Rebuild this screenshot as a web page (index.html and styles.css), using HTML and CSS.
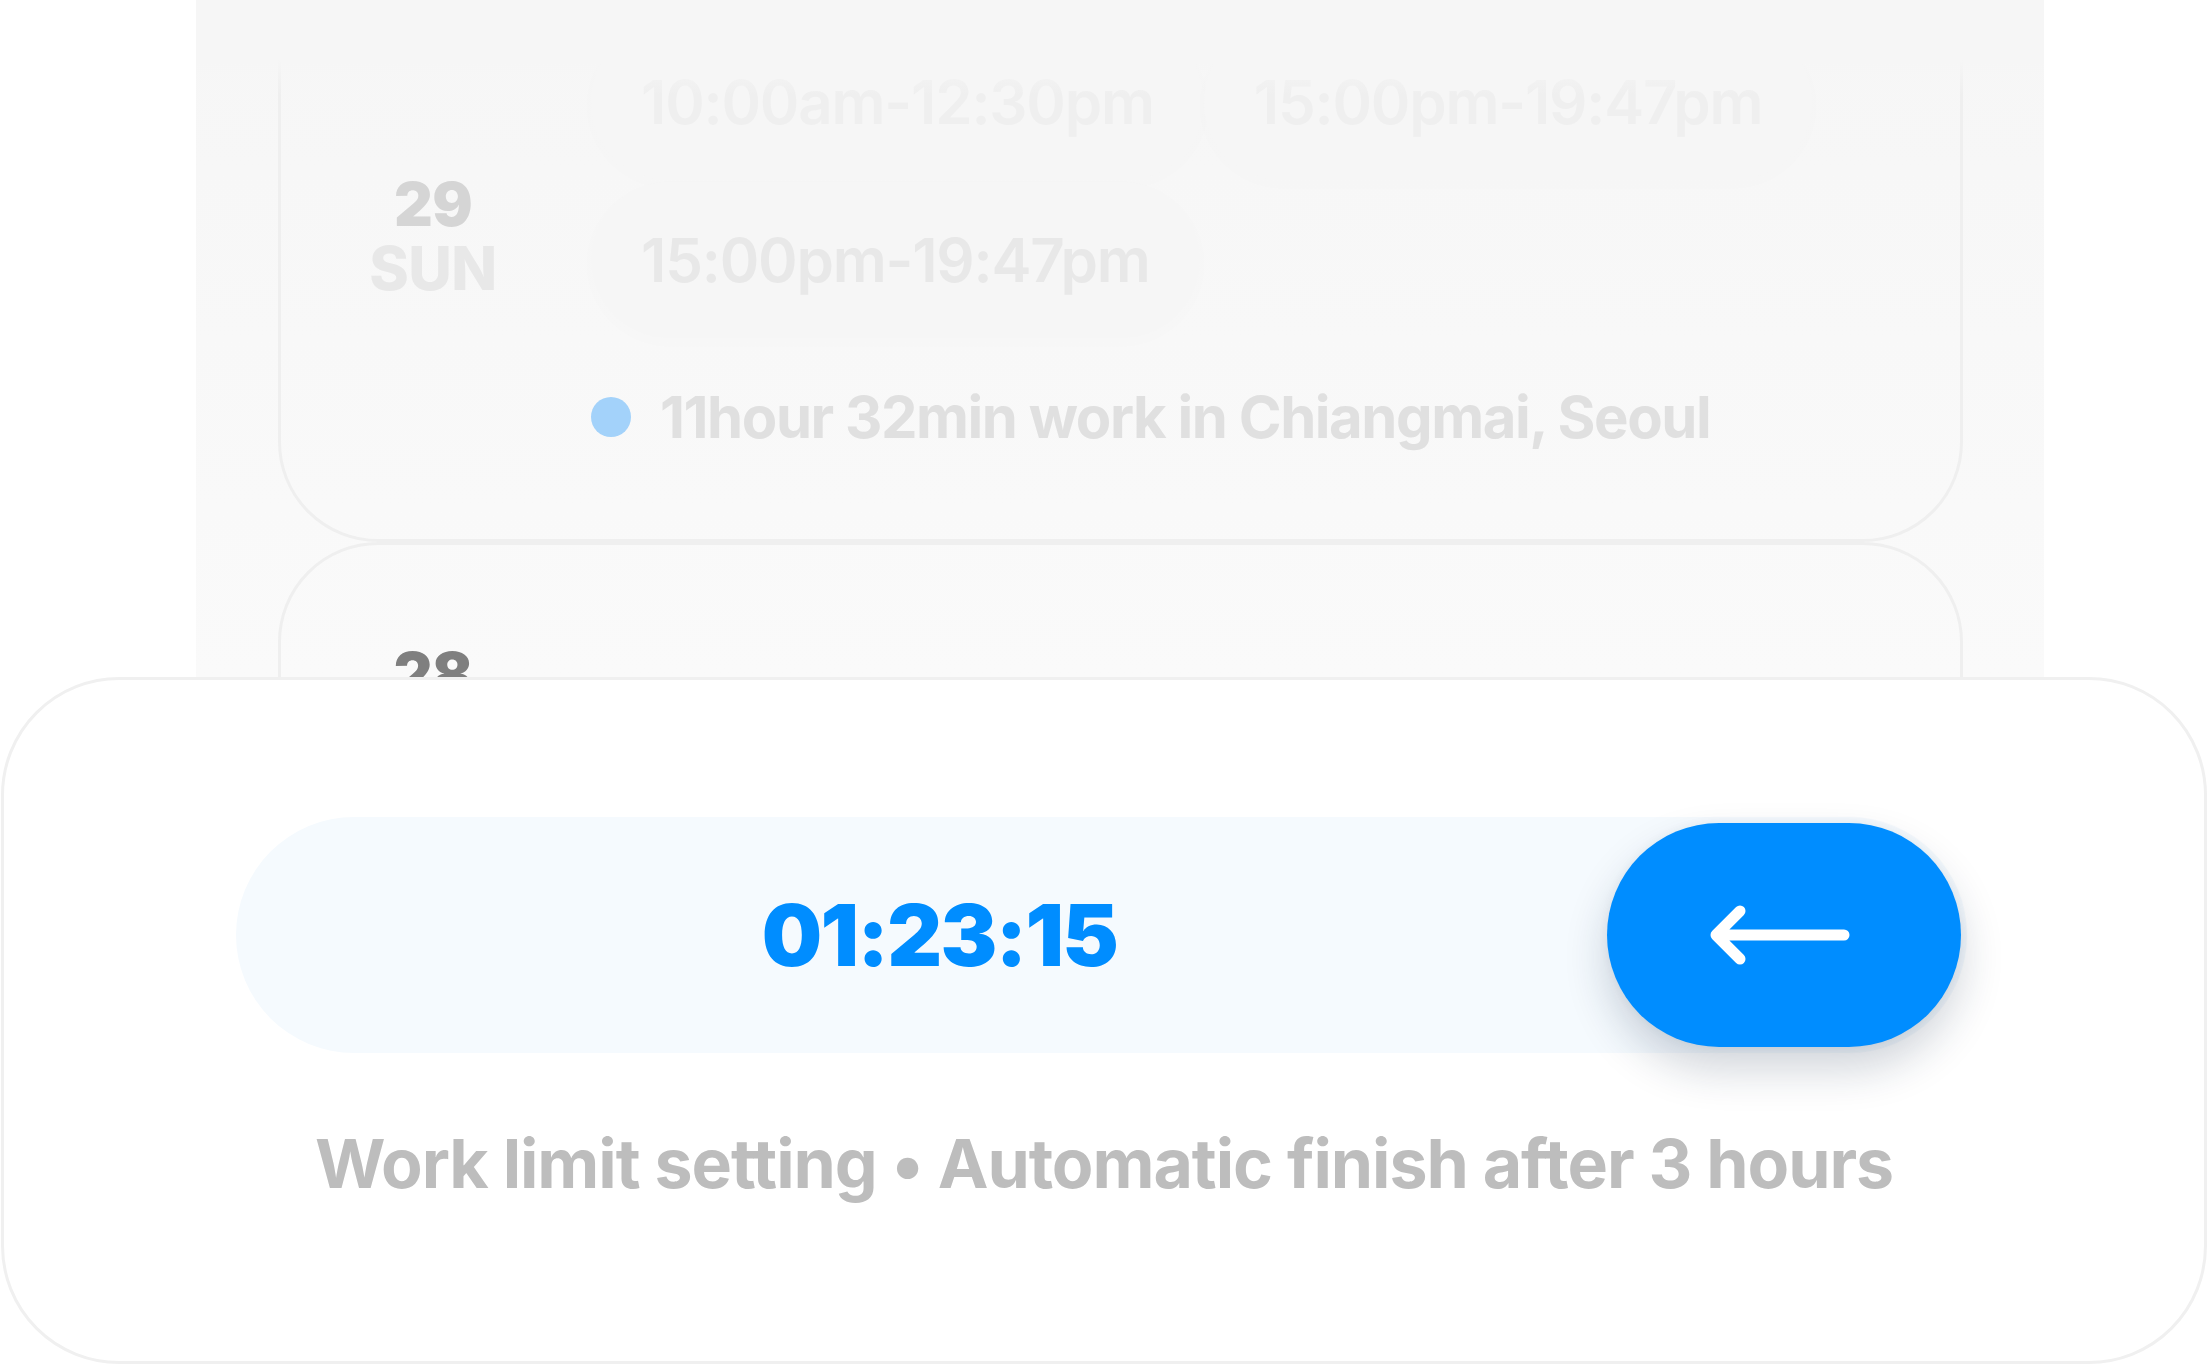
FILE: index.html
```html
<!DOCTYPE html>
<html lang="en">
<head>
<meta charset="utf-8">
<title>Work timer</title>
<link rel="stylesheet" href="styles.css">
</head>
<body>
<div class="screen">
  <section class="history">
    <div class="fade-top"></div>
    <article class="day-card day-card--first">
      <div class="date">
        <span class="date-num">29</span>
        <span class="date-day">SUN</span>
      </div>
      <div class="day-body">
        <div class="sessions">
          <span class="session session--far">10:00am-12:30pm</span>
          <span class="session session--far">15:00pm-19:47pm</span>
          <span class="session">15:00pm-19:47pm</span>
        </div>
        <div class="summary">
          <span class="dot"></span>
          <span class="summary-text">11hour 32min work in Chiangmai, Seoul</span>
        </div>
      </div>
    </article>
    <article class="day-card day-card--top">
      <div class="date">
        <span class="date-num date-num--dark">28</span>
      </div>
      <div class="day-body"></div>
    </article>
  </section>
  <section class="sheet">
    <div class="timer-bar">
      <div class="timer">01:23:15</div>
      <button class="back-btn" type="button" aria-label="Back">
        <svg class="arrow" width="150" height="70" viewBox="0 0 150 70" aria-hidden="true">
          <path d="M135 35 H7 M31 11 L7 35 L31 59" fill="none" stroke="#fff" stroke-width="11" stroke-linecap="round" stroke-linejoin="round"/>
        </svg>
      </button>
    </div>
    <p class="caption">Work limit setting • Automatic finish after 3 hours</p>
  </section>
</div>
</body>
</html>
```

FILE: styles.css
```css
html, body {
  margin: 0;
  padding: 0;
  background: #ffffff;
}

body {
  font-family: Inter, "Noto Sans", "Liberation Sans", sans-serif;
}

.screen {
  width: 2209px;
  height: 1372px;
  overflow: hidden;
}

/* ---------- history list ---------- */
.history {
  position: relative;
  box-sizing: border-box;
  width: 1848px;
  height: 677px;
  margin-left: 196px;
  padding: 0 81px 0 82px;
  overflow: hidden;
  background: linear-gradient(#f6f6f6, #fafafa);
}

.fade-top {
  position: absolute;
  top: 0;
  left: 0;
  right: 0;
  height: 95px;
  z-index: 2;
  background: linear-gradient(#f6f6f6 0, #f6f6f6 60px, rgba(246, 246, 246, 0) 95px);
}

.day-card {
  box-sizing: border-box;
  display: grid;
  grid-template-columns: 304px 1fr;
  column-gap: 6px;
  align-items: center;
  padding: 92px 0;
  border: 3px solid #efefef;
  border-radius: 100px;
}

.day-card--first {
  margin-top: -71px;
}

.day-card--top {
  align-items: start;
  padding-top: 97px;
}

.date {
  display: flex;
  flex-direction: column;
  align-items: center;
  font-size: 60px;
  font-weight: 800;
  line-height: 64px;
  letter-spacing: -0.01em;
}

.date-num {
  font-weight: 900;
  color: #d5d5d5;
}

.date-num--dark {
  color: #7f7f7f;
}

.date-day {
  color: #e8e8e8;
}

.sessions {
  display: flex;
  flex-wrap: wrap;
  gap: 2px 0;
}

.session {
  box-sizing: border-box;
  height: 156px;
  padding: 0 50px;
  border-radius: 78px;
  display: flex;
  align-items: center;
  font-size: 60px;
  font-weight: 600;
  letter-spacing: -0.02em;
  color: #e8e8e8;
  background: #f6f6f6;
  box-shadow: 0 4px 24px rgba(0, 0, 0, 0.012);
}

.session--far {
  color: #efefef;
}

.summary {
  display: flex;
  align-items: center;
  gap: 29px;
  height: 60px;
  margin-top: 49px;
}

.dot {
  flex: none;
  width: 40px;
  height: 40px;
  border-radius: 50%;
  background: #a3d2fa;
}

.summary-text {
  font-size: 58px;
  font-weight: 700;
  letter-spacing: -0.025em;
  color: #e0e0e0;
  white-space: nowrap;
}

/* ---------- bottom sheet ---------- */
.sheet {
  box-sizing: border-box;
  height: 687px;
  margin: 0 2px 0 1px;
  padding-top: 137px;
  border: 3px solid #f0f0f0;
  border-radius: 118px;
  background: #ffffff;
  display: flex;
  flex-direction: column;
  align-items: center;
}

.timer-bar {
  box-sizing: border-box;
  align-self: flex-start;
  width: 1731px;
  height: 236px;
  margin-left: 232px;
  padding: 6px;
  border-radius: 118px;
  background: #f5fafe;
  display: flex;
  align-items: center;
}

.timer {
  flex: 1;
  padding-left: 30px;
  text-align: center;
  font-size: 85px;
  font-weight: 900;
  letter-spacing: -0.02em;
  color: #008dff;
}

.back-btn {
  flex: none;
  width: 354px;
  height: 224px;
  padding: 0;
  border: none;
  border-radius: 112px;
  background: #008dff;
  box-shadow: 0 22px 44px rgba(20, 40, 70, 0.2), 0 0 10px rgba(20, 60, 100, 0.06);
  display: flex;
  align-items: center;
  justify-content: center;
  cursor: pointer;
}

.arrow {
  display: block;
}

.caption {
  margin: 70px 0 0;
  font-size: 68px;
  font-weight: 700;
  line-height: 1.2;
  letter-spacing: -0.016em;
  color: #bdbdbd;
  white-space: nowrap;
}
```
